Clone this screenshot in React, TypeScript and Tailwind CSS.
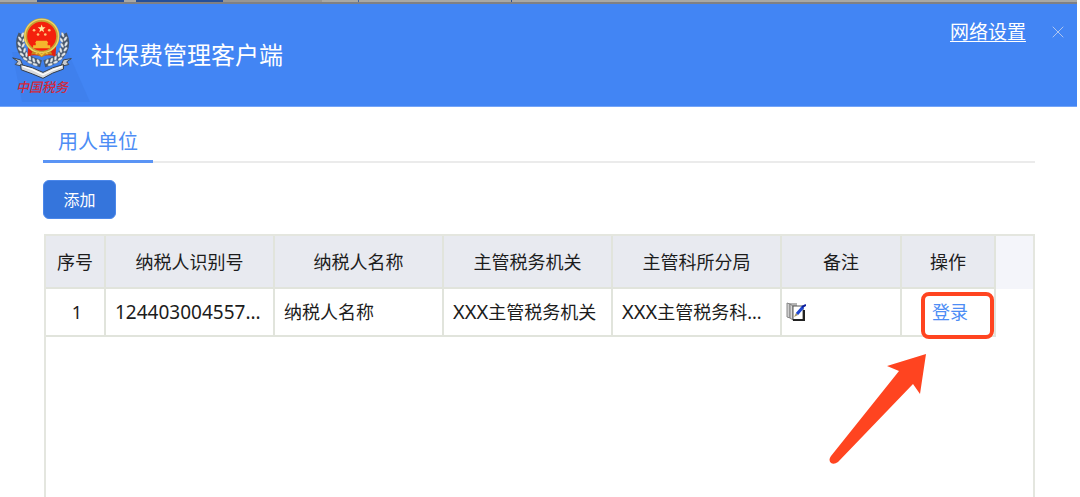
import { X } from "lucide-react";

// grains of the left wheat ear, from top to bottom: x, y, angle
const grains = [
  [68, 80, 20],
  [60, 92, -35],
  [72, 96, 30],
  [58, 108, -30],
  [70, 112, 30],
  [60, 124, -40],
  [74, 127, 15],
  [66, 140, -50],
  [80, 140, 0],
  [76, 153, -60],
  [90, 150, -10],
  [90, 163, -70],
  [102, 157, -20],
  [106, 170, -75],
  [116, 161, -30],
];

function WheatEar() {
  return (
    <g>
      <path d="M66 78 C50 112 62 152 124 168" fill="none" stroke="#47566b" strokeWidth="22" />
      {grains.map(([x, y, angle]) => (
        <ellipse
          key={`${x}-${y}`}
          cx={x}
          cy={y}
          rx="4"
          ry="8"
          transform={`rotate(${angle} ${x} ${y})`}
          fill="#e3e7ea"
          stroke="#5d6b7d"
          strokeWidth="1"
        />
      ))}
    </g>
  );
}

function NationalEmblem() {
  return (
    <svg viewBox="36 30 182 186" className="w-[60px] h-[62px]" aria-hidden="true">
      <WheatEar />
      <g transform="translate(258 0) scale(-1 1)">
        <WheatEar />
      </g>
      {/* ribbon */}
      <path
        d="M38 150 L62 156 L70 176 L46 170 L54 161 Z"
        fill="#c9ccd0"
        stroke="#3b4451"
        strokeWidth="3"
      />
      <path
        d="M216 152 L192 156 L184 176 L208 170 L202 162 Z"
        fill="#c9ccd0"
        stroke="#3b4451"
        strokeWidth="3"
      />
      <path
        d="M62 170 Q100 178 130 194 Q158 178 192 170 L192 184 Q158 194 130 212 Q98 198 64 186 Z"
        fill="#d8dadd"
        stroke="#343c48"
        strokeWidth="3"
      />
      <path d="M68 176 Q100 184 130 201 Q158 186 188 176" fill="none" stroke="#fff" strokeWidth="4" />
      {/* red drapery */}
      <path d="M84 112 H170 L168 146 Q148 138 126 146 Q104 138 84 146 Z" fill="#e3210f" />
      <circle cx="126" cy="84" r="49" fill="#f4200d" stroke="#c5a235" strokeWidth="10" />
      <circle cx="126" cy="84" r="51" fill="none" stroke="#ecd56a" strokeWidth="4" />
      <path d="M98 130 Q126 144 154 130 L158 140 Q142 136 126 148 Q110 136 94 140 Z" fill="#c9861f" />
      <path d="M108 138 L116 132 L126 142 L136 132 L144 138" fill="none" stroke="#f1c13a" strokeWidth="4" />
      {/* stars and gate */}
      <path
        d="M126 49 l3 8 h9 l-7 6 l2 9 l-7 -5 l-7 5 l2 -9 l-7 -6 h9 Z"
        fill="#ffe9a0"
      />
      <g fill="#ffc47a">
        <circle cx="103" cy="66" r="4" />
        <circle cx="149" cy="66" r="4" />
        <circle cx="115" cy="79" r="4" />
        <circle cx="137" cy="79" r="4" />
      </g>
      <path d="M110 98 H142 L146 105 H106 Z M108 105 H144 V112 H108 Z M100 112 H152 V121 H100 Z" fill="#f5b62d" />
    </svg>
  );
}

function NoteIcon() {
  return (
    <svg viewBox="0 0 20 20" className="w-5 h-5" aria-hidden="true">
      <path d="M1 1 H11 V5 H4 V16 L1 14 Z" fill="#b4b4b4" />
      <path d="M1 1 V15 L4 16 V2 Z" fill="#cfcfcf" stroke="#8a8a8a" />
      <path d="M4 2 V16 L7 18 V4 Z" fill="#d8d8d8" stroke="#808080" />
      <path d="M7 4 H17 V18 H7 Z" fill="#fff" stroke="#555" />
      <path d="M18 8 V18 H7" fill="none" stroke="#222" strokeWidth="2" />
      <path d="M8 15 L10 11 L12 13 Z" fill="#a09468" />
      <path d="M11 12 L17 5" stroke="#1d46d0" strokeWidth="3" />
      <path d="M16 5 L20 3" stroke="#0a1c9c" strokeWidth="2" />
    </svg>
  );
}

function TitleStrip() {
  return (
    <div className="flex h-1 bg-[#a8a8a5] border-b-2 border-[#7f8084]">
      <div className="w-[37px]" />
      <div className="w-[87px] bg-[#254f98]" />
      <div className="w-3" />
      <div className="w-[87px] bg-[#254f98]" />
      <div className="w-[99px] bg-[#979694]" />
      <div className="w-9" />
      <div className="w-px bg-[#44659f]" />
      <div className="w-[152px]" />
      <div className="w-px bg-[#2e4f8c]" />
    </div>
  );
}

const headers = ["序号", "纳税人识别号", "纳税人名称", "主管税务机关", "主管科所分局", "备注", "操作"];

const rows = [
  {
    id: 1,
    taxNo: "124403004557...",
    name: "纳税人名称",
    authority: "主管税务机关",
    branch: "主管税务科...",
  },
];

const cell = "border-r-2 border-b-2 border-[#e1e4dc] font-normal whitespace-nowrap";

export default function App() {
  return (
    <div className="min-h-screen flex flex-col bg-white text-[#1c1c1c] font-['Noto_Sans','Noto_Sans_CJK_SC',sans-serif]">
      <div className="mr-[3px]">
        <TitleStrip />
        <header className="relative flex h-[103px] items-start justify-between bg-[#4285f4] border-b border-[#74a5f8]">
          <svg viewBox="0 0 80 50" className="absolute left-3 bottom-1 w-20 h-[50px]" aria-hidden="true">
            <path d="M0 0 H56 L78 50 H10 Z" fill="#3f80ed" />
          </svg>
          <div className="relative flex items-start pl-3 pt-[14px]">
            <div className="flex w-[60px] flex-col items-center">
              <NationalEmblem />
              <span className="text-[13px] leading-4 italic font-medium text-[#d3283a] font-['Liberation_Serif','Noto_Sans_CJK_SC',serif]">
                中国税务
              </span>
            </div>
            <h1 className="ml-[19px] mt-[21px] text-2xl leading-8 text-white">社保费管理客户端</h1>
          </div>
          <div className="flex items-center pr-[9px] pt-[14px]">
            <a href="#" className="text-[19px] leading-7 text-white underline underline-offset-2">
              网络设置
            </a>
            <button type="button" aria-label="关闭" className="ml-[22px] text-[#c5d3ee]">
              <X size={20} strokeWidth={1} />
            </button>
          </div>
        </header>
      </div>

      <main className="flex flex-1 flex-col pl-[43px] pr-[45px]">
        <div className="mt-[18px] flex items-end">
          <button
            type="button"
            className="h-[38px] px-[15px] pb-0.5 text-xl leading-7 text-[#4d8df5] border-b-3 border-[#5a94f5]"
          >
            用人单位
          </button>
          <div className="flex-1 h-0.5 bg-[#ebebeb]" />
        </div>

        <button
          type="button"
          className="mt-[17px] h-[39px] w-[73px] rounded-md border border-[#4b87ea] bg-[#3575dc] text-base text-white"
        >
          添加
        </button>

        <div className="mt-[15px] ml-px flex-1 border-2 border-b-0 border-[#e4e6df]">
          <table className="w-full table-fixed border-separate border-spacing-0 text-lg leading-7">
            <colgroup>
              <col className="w-[60px]" />
              <col className="w-[169px]" />
              <col className="w-[169px]" />
              <col className="w-[169px]" />
              <col className="w-[169px]" />
              <col className="w-[120px]" />
              <col className="w-[94px]" />
              <col />
            </colgroup>
            <thead>
              <tr className="h-[53px]">
                {headers.map((h) => (
                  <th key={h} className={`${cell} bg-[#e8eaf0]`}>
                    {h}
                  </th>
                ))}
                <td className="bg-[#f4f5fa]" />
              </tr>
            </thead>
            <tbody>
              {rows.map((row) => (
                <tr key={row.id} className="h-12">
                  <td className={`${cell} text-center pl-1`}>{row.id}</td>
                  <td className={`${cell} pl-[9px] text-[19px]`}>{row.taxNo}</td>
                  <td className={`${cell} pl-[9px]`}>{row.name}</td>
                  <td className={`${cell} pl-[9px]`}>
                    <span className="text-xl leading-7">XXX</span>
                    {row.authority}
                  </td>
                  <td className={`${cell} pl-[9px]`}>
                    <span className="text-xl leading-7">XXX</span>
                    {row.branch}
                  </td>
                  <td className={`${cell} pl-1`}>
                    <button type="button" aria-label="编辑备注" className="block">
                      <NoteIcon />
                    </button>
                  </td>
                  <td className={`${cell} relative pl-1 text-center`}>
                    <a href="#" className="text-[#4d8df5]">
                      登录
                    </a>
                    <div className="pointer-events-none absolute right-0 top-[3px] h-[47px] w-[73px] rounded-lg border-4 border-[#ff4420]" />
                    <svg
                      viewBox="0 0 98 112"
                      className="pointer-events-none absolute right-[67px] top-[64px] h-28 w-[98px]"
                      aria-hidden="true"
                    >
                      <path
                        d="M97 1 L58 13 L70 18 L2 103 Q-1 107 2 110 Q5 112 9 109 L84 31 L91 41 Z"
                        fill="#ff4420"
                      />
                    </svg>
                  </td>
                  <td />
                </tr>
              ))}
            </tbody>
          </table>
        </div>
      </main>
    </div>
  );
}
